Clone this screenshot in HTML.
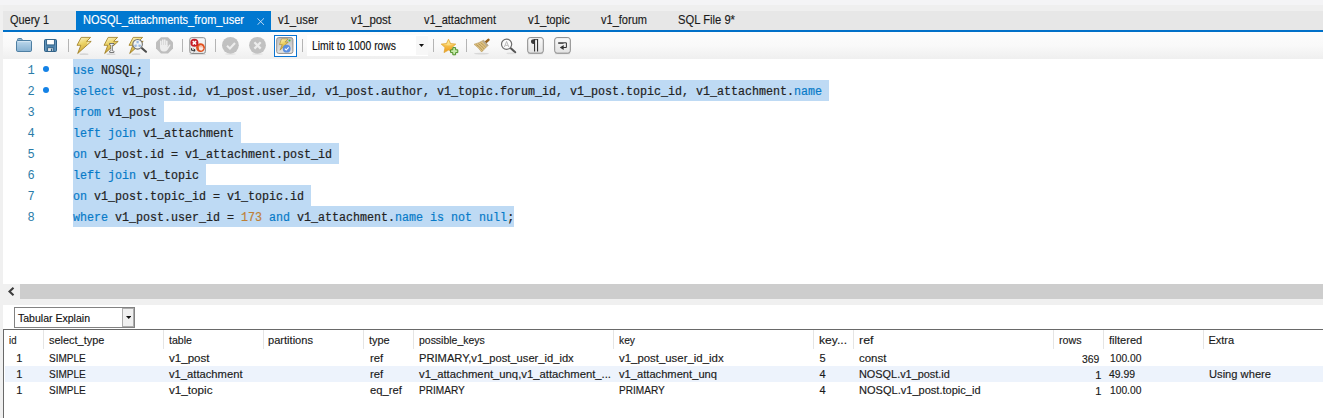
<!DOCTYPE html>
<html>
<head>
<meta charset="utf-8">
<title>MySQL Workbench</title>
<style>
html,body{margin:0;padding:0;}
body{width:1323px;height:418px;overflow:hidden;background:#f0f0f0;position:relative;font-family:"Liberation Sans",sans-serif;}
.abs{position:absolute;}
.t{position:absolute;white-space:pre;line-height:1;transform-origin:0 0;-webkit-text-stroke:0.15px;}
#topstrip{left:0;top:0;width:1323px;height:5px;background:#f4f4f6;}
#tabbar{left:3px;top:5px;width:1320px;height:25px;background:#e7e7e7;}
#tabbar0{left:3px;top:5px;width:1320px;height:6px;background:#efefef;}
#tabline{left:3px;top:30px;width:1320px;height:2px;background:#0070c8;}
#acttab{left:76px;top:11px;width:195px;height:20px;background:#0078d0;}
#toolbar{left:3px;top:32px;width:1320px;height:27px;background:linear-gradient(#fcfcfc 0%,#f9f9f9 50%,#efefef 100%);}
.sep{position:absolute;width:1px;top:39px;height:13px;background:#b4b4b4;}
#editor{left:3px;top:59px;width:1320px;height:225px;background:#fff;}
.sel{position:absolute;left:73px;height:21px;background:#bedaf4;}
.ln{position:absolute;font-family:"Liberation Mono",monospace;font-size:12px;color:#2a7ca8;width:20px;text-align:right;left:14.8px;line-height:21px;height:21px;padding-top:1.7px;}
.code{position:absolute;left:73px;font-family:"Liberation Mono",monospace;font-size:12px;color:#222;white-space:pre;line-height:21px;height:21px;padding-top:1.7px;transform:scaleX(0.9722);transform-origin:0 0;-webkit-text-stroke:0.2px;}
.k{color:#077ac8;}
.n{color:#bf7f35;}
.dot{position:absolute;width:6px;height:6px;border-radius:50%;background:#1482e6;left:43px;}
#hscroll{left:3px;top:284px;width:1320px;height:16px;background:#f0f0f0;}
#thumb{left:20px;top:284px;width:1303px;height:15px;background:#cdcdcd;}
#respanel{left:3px;top:305px;width:1320px;height:113px;background:#fff;}
#combo{left:14px;top:307px;width:119px;height:19px;border:1px solid #828282;background:#fff;}
#combobtn{left:122px;top:308px;width:10px;height:17px;border:1px solid #adadad;background:#f0f0f0;}
#tbl{left:3px;top:329px;width:1320px;height:89px;background:#fff;border-top:1px solid #696969;border-left:1px solid #696969;}
.hs{position:absolute;top:330px;width:1px;height:19px;background:#e5e5e5;}
#rowhl{left:5px;top:366px;width:1318px;height:16px;background:#edf3fc;}
</style>
</head>
<body>
<div class="abs" id="topstrip"></div>
<div class="abs" id="tabbar"></div>
<div class="abs" id="tabbar0"></div>
<div class="abs" id="acttab"></div>
<div class="abs" id="tabline"></div>
<div class="abs" id="toolbar"></div>
<div class="sep" style="left:68px"></div>
<div class="sep" style="left:182px"></div>
<div class="sep" style="left:215px"></div>
<div class="sep" style="left:302px"></div>
<div class="sep" style="left:433px"></div>
<div class="sep" style="left:466px"></div>
<div class="abs" style="left:307px;top:35px;width:121px;height:21px;background:#fff;"></div>
<div class="abs" style="left:416px;top:36px;width:12px;height:19px;background:#f7f7f7;"></div>
<svg class="abs" style="left:419px;top:44px" width="5" height="3" viewBox="0 0 5 3"><path d="M0 0h5L2.5 3z" fill="#111"/></svg>
<svg class="abs" style="left:0;top:32px" width="600" height="27" viewBox="0 32 600 27">
<defs>
<linearGradient id="gFolder" x1="0" y1="0" x2="0" y2="1"><stop offset="0" stop-color="#bdd8ec"/><stop offset="1" stop-color="#86b1d1"/></linearGradient>
<linearGradient id="gBolt" x1="0" y1="0" x2="0.35" y2="1"><stop offset="0" stop-color="#fcf6cf"/><stop offset="0.45" stop-color="#ecd468"/><stop offset="1" stop-color="#caa132"/></linearGradient>
<linearGradient id="gStar" x1="0" y1="0" x2="0" y2="1"><stop offset="0" stop-color="#fde27a"/><stop offset="1" stop-color="#ee9a18"/></linearGradient>
<linearGradient id="gBtn" x1="0" y1="0" x2="0" y2="1"><stop offset="0" stop-color="#fafafa"/><stop offset="1" stop-color="#e2e2e2"/></linearGradient>
<linearGradient id="gBtnDn" x1="0" y1="0" x2="0" y2="1"><stop offset="0" stop-color="#bdbdbd"/><stop offset="1" stop-color="#e4e4e4"/></linearGradient>
<path id="bolt" d="M4.2 0.4H13.6L9.6 4.4H14.2L0.7 16.5L3.8 8.3H0Z"/>
</defs>
<!-- folder -->
<path d="M17.5 41V39.6Q17.5 38.5 18.6 38.5H21.2Q22.2 38.5 22.5 41Z" fill="#8fb4d0" stroke="#4e7fa3"/>
<rect x="16.5" y="40.5" width="15" height="11" rx="1.3" fill="url(#gFolder)" stroke="#4e7fa3"/>
<path d="M17.6 41.6H30.4" stroke="#d4e6f3" stroke-width="1"/>
<!-- floppy -->
<rect x="44.5" y="39.5" width="12" height="12" rx="1" fill="#4f84ad" stroke="#2e5f85"/>
<path d="M45.6 40.5V50.5M55.4 40.5V50.5" stroke="#6d9cc0" stroke-width="0.8"/>
<rect x="46.6" y="39.5" width="7.8" height="5.4" fill="#fff" stroke="#2e5f85" stroke-width="0.9"/>
<rect x="47.6" y="47.7" width="5.6" height="3.8" fill="#e8e8e8" stroke="#2e5f85" stroke-width="0.9"/>
<rect x="50.9" y="48.6" width="1.2" height="2.4" fill="#2e5f85"/>
<!-- bolt 1 -->
<ellipse cx="84" cy="54.2" rx="4.5" ry="0.9" fill="#d6d6d6"/>
<use href="#bolt" x="77" y="37" fill="url(#gBolt)" stroke="#9c7a1e" stroke-width="0.8"/>
<path d="M87.5 41.8H90L87 44.5Z" fill="#f8f0c8" opacity="0.8"/>
<!-- bolt 2 + I cursor -->
<ellipse cx="111" cy="54.2" rx="4.5" ry="0.9" fill="#d6d6d6"/>
<use href="#bolt" x="104" y="37" fill="url(#gBolt)" stroke="#9c7a1e" stroke-width="0.8"/>
<path d="M110.3 44.2H113.3M110.3 51.8H113.3M111.8 44.2V51.8" stroke="#4a4a4a" stroke-width="2.3" stroke-linecap="round"/>
<path d="M110.3 44.2H113.3M110.3 51.8H113.3M111.8 44.2V51.8" stroke="#fff" stroke-width="1.1" stroke-linecap="round"/>
<!-- bolt 3 + magnifier -->
<ellipse cx="136" cy="54.2" rx="4.5" ry="0.9" fill="#d6d6d6"/>
<use href="#bolt" x="129" y="37" fill="url(#gBolt)" stroke="#9c7a1e" stroke-width="0.8"/>
<path d="M142 48.2L146 51.7" stroke="#4c4c4c" stroke-width="2.1" stroke-linecap="round"/>
<circle cx="137.6" cy="44.3" r="4.8" fill="#f4f6f4" stroke="#727272" stroke-width="1.1"/>
<path d="M137.6 42.3L135.6 46H139.6Z" fill="none" stroke="#c9d6ea" stroke-width="0.6"/>
<circle cx="137.6" cy="42" r="1.3" fill="#9dbbe3"/><circle cx="135.5" cy="45.8" r="1.3" fill="#9dbbe3"/><circle cx="139.7" cy="45.8" r="1.3" fill="#9dbbe3"/>
<!-- stop (disabled) -->
<path d="M161 37.2H168L173 42.2V48.5L168 53.5H161L156 48.5V42.2Z" fill="#bebebe"/>
<path d="M160.8 46.5V41.3M162.8 45V40.1M164.8 45V40.1M166.8 45.5V41.2" stroke="#ededed" stroke-width="1.6" stroke-linecap="round" fill="none"/>
<path d="M160 45H167.6V47.2Q168.6 45.2 169.8 44.3Q170.7 44.6 170.3 45.6Q168.8 48 167.5 50Q166.3 51.6 164 51.6Q160 51.6 160 47Z" fill="#ededed"/>
<!-- stop-on-error toggle -->
<rect x="189.6" y="54" width="16" height="1" fill="#dcdcdc"/>
<rect x="189.8" y="37.7" width="15.6" height="15.8" rx="2" fill="url(#gBtn)" stroke="#8c8c8c"/>
<path d="M191.6 48.2V50.3H195M193.6 48.8L195.2 50.3L193.6 51.8" stroke="#2a2a2a" stroke-width="1" fill="none"/>
<circle cx="200.5" cy="47.6" r="4.4" fill="#e2501c"/>
<path d="M199.3 47.8V46.2M200.3 47.5V45.6M201.3 47.5V45.6M202.3 48V46.3" stroke="#fbe9e2" stroke-width="0.85" stroke-linecap="round" fill="none"/>
<path d="M198.9 47.3H202.7V48.2L203.3 47.4Q203.8 47.6 203.5 48.2Q203 49.4 202.4 50Q201.8 50.6 200.7 50.6Q198.9 50.6 198.9 48.6Z" fill="#fbe9e2"/>
<circle cx="194.4" cy="42.8" r="4" fill="#c61d27"/>
<path d="M192.7 41.1L196.1 44.5M196.1 41.1L192.7 44.5" stroke="#fff" stroke-width="1.5"/>
<!-- commit / rollback (disabled) -->
<ellipse cx="230.4" cy="54" rx="5.5" ry="0.8" fill="#e0e0e0"/>
<circle cx="230.4" cy="45.3" r="8.4" fill="#c1c1c1"/>
<path d="M227 45.8L229.9 48.5L235 43" stroke="#ededed" stroke-width="2.1" fill="none"/>
<ellipse cx="257.5" cy="54" rx="5.5" ry="0.8" fill="#e0e0e0"/>
<circle cx="257.5" cy="45.3" r="8.4" fill="#c1c1c1"/>
<path d="M254.4 42.3L260.7 48.6M260.7 42.3L254.4 48.6" stroke="#ededed" stroke-width="2.2"/>
<!-- autocommit toggle (focused) -->
<rect x="274.5" y="35.5" width="22" height="21" fill="#fff" stroke="#0a74d2"/>
<rect x="276.7" y="37.6" width="16.2" height="15.8" rx="2" fill="url(#gBtnDn)" stroke="#909090"/>
<path d="M281.5 38.9H288L285.2 42H288.2L280 50.2L282.2 44.6H279.5Z" fill="url(#gBolt)" stroke="#a88628" stroke-width="0.6"/>
<circle cx="286.7" cy="48.7" r="3.9" fill="#5b90e0"/>
<path d="M284.8 48.7L286.2 50L288.7 47.3" stroke="#fff" stroke-width="1.1" fill="none"/>
<circle cx="289.5" cy="40.5" r="1" fill="#41c241"/>
<!-- star + -->
<path d="M448.5 39.2L450.6 43.6L455.8 44.1L452 47.5L453 52.6L448.5 50.1L444 52.6L445 47.5L441.2 44.1L446.4 43.6Z" fill="url(#gStar)" stroke="#dba02c" stroke-width="0.7"/>
<path d="M448.5 40.5L450 44.3L454 44.7L448.5 45.5L443 44.7L447 44.3Z" fill="#fff3b0" opacity="0.55"/>
<path d="M452.8 47.6H455.6V49.8H457.8V52.6H455.6V54.8H452.8V52.6H450.6V49.8H452.8Z" fill="#c6eaaa" stroke="#4c8f26" stroke-width="1"/>
<!-- broom -->
<ellipse cx="481.5" cy="53.7" rx="7.5" ry="0.9" fill="#d8d8d8"/>
<path d="M485.6 42.4L488.4 39.9" stroke="#94601c" stroke-width="2.6" stroke-linecap="round"/>
<path d="M474 44.3Q479 43 483.6 40.2L488.2 45.3Q485 48.5 481.6 52Q478.5 47.5 474 44.3Z" fill="#ddc082" stroke="#b89858" stroke-width="0.6"/>
<path d="M476.2 44.6Q479.5 46.2 482.6 50.6M478.4 43.7Q481.5 45.6 484.2 49M480.6 42.6Q483.2 44.6 485.8 47.4" stroke="#a98942" stroke-width="0.7" fill="none"/>
<path d="M483.6 40.2L488.2 45.3L486.6 46.8Q484.5 43.5 482 41.3Z" fill="#b7ab94"/>
<!-- find -->
<path d="M510.8 48.3L515.2 52.2" stroke="#555" stroke-width="2.1" stroke-linecap="round"/>
<ellipse cx="511" cy="53.4" rx="4.5" ry="0.8" fill="#dedede"/>
<circle cx="506.6" cy="44.2" r="5.1" fill="#fcfcfc" stroke="#6e6e6e" stroke-width="1.2"/>
<path d="M504.4 47L506.6 41.4L508.8 47M505.4 45.4H507.8" stroke="#b4b4b4" stroke-width="0.9" fill="none"/>
<!-- pilcrow -->
<rect x="527.8" y="53" width="15.4" height="1.2" rx="0.6" fill="#d4d4d4"/>
<rect x="527.7" y="37.6" width="15.6" height="15.6" rx="2.4" fill="url(#gBtn)" stroke="#888"/>
<path d="M534.2 39.2H533.6Q531 39.2 531 41.6Q531 44 533.6 44H534.2Z" fill="#3a3a3a"/>
<rect x="534" y="39.2" width="1.1" height="12.3" fill="#333"/><rect x="537" y="39.2" width="1.1" height="12.3" fill="#333"/><rect x="534" y="39.2" width="4.1" height="0.9" fill="#333"/>
<!-- wrap -->
<rect x="554.8" y="53" width="15.4" height="1.2" rx="0.6" fill="#d4d4d4"/>
<rect x="554.7" y="37.6" width="15.6" height="15.6" rx="2.4" fill="url(#gBtn)" stroke="#888"/>
<rect x="558.2" y="42.3" width="5.4" height="1.5" fill="#333"/>
<path d="M563.4 42.8H566.4V47.5H563" stroke="#333" stroke-width="1" fill="none"/>
<path d="M563.7 45.1L559.8 47.5L563.7 49.9Z" fill="#333"/>
</svg>
<svg class="abs" style="left:257px;top:18px" width="7.4" height="7.2" viewBox="0 0 7.4 7.2"><path d="M0.4 0.3L7 6.9M7 0.3L0.4 6.9" stroke="#cfe4f8" stroke-width="0.9"/></svg>

<div class="abs" id="editor"></div>
<div class="sel" style="top:59px;width:77px"></div>
<div class="sel" style="top:80px;width:756px"></div>
<div class="sel" style="top:101px;width:91px"></div>
<div class="sel" style="top:122px;width:168px"></div>
<div class="sel" style="top:143px;width:266px"></div>
<div class="sel" style="top:164px;width:133px"></div>
<div class="sel" style="top:185px;width:238px"></div>
<div class="sel" style="top:206px;width:441px"></div>
<div class="ln" style="top:59px">1</div>
<div class="dot" style="top:66px"></div>
<div class="code" style="top:59px"><span class="k">use</span> NOSQL;</div>
<div class="ln" style="top:80px">2</div>
<div class="dot" style="top:87px"></div>
<div class="code" style="top:80px"><span class="k">select</span> v1_post.id, v1_post.user_id, v1_post.author, v1_topic.forum_id, v1_post.topic_id, v1_attachment.<span class="k">name</span></div>
<div class="ln" style="top:101px">3</div>
<div class="code" style="top:101px"><span class="k">from</span> v1_post</div>
<div class="ln" style="top:122px">4</div>
<div class="code" style="top:122px"><span class="k">left</span> <span class="k">join</span> v1_attachment</div>
<div class="ln" style="top:143px">5</div>
<div class="code" style="top:143px"><span class="k">on</span> v1_post.id = v1_attachment.post_id</div>
<div class="ln" style="top:164px">6</div>
<div class="code" style="top:164px"><span class="k">left</span> <span class="k">join</span> v1_topic</div>
<div class="ln" style="top:185px">7</div>
<div class="code" style="top:185px"><span class="k">on</span> v1_post.topic_id = v1_topic.id</div>
<div class="ln" style="top:206px">8</div>
<div class="code" style="top:206px"><span class="k">where</span> v1_post.user_id = <span class="n">173</span> <span class="k">and</span> v1_attachment.<span class="k">name</span> <span class="k">is</span> <span class="k">not</span> <span class="k">null</span>;</div>
<div class="abs" id="hscroll"></div>
<div class="abs" id="thumb"></div>
<svg class="abs" style="left:8px;top:287px" width="7" height="9" viewBox="0 0 7 9"><path d="M5.5 0.8L1.5 4.5L5.5 8.2" fill="none" stroke="#3c3c3c" stroke-width="2.1"/></svg>
<div class="abs" id="respanel"></div>
<div class="abs" id="combo"></div>
<div class="abs" id="combobtn"></div>
<svg class="abs" style="left:125.8px;top:316px" width="5.4" height="3" viewBox="0 0 5.4 3"><path d="M0 0h5.4L2.7 3z" fill="#111"/></svg>
<div class="abs" id="tbl"></div>
<div class="abs" id="rowhl"></div>
<div class="hs" style="left:43px"></div>
<div class="hs" style="left:163px"></div>
<div class="hs" style="left:263px"></div>
<div class="hs" style="left:363px"></div>
<div class="hs" style="left:413px"></div>
<div class="hs" style="left:613px"></div>
<div class="hs" style="left:813px"></div>
<div class="hs" style="left:853px"></div>
<div class="hs" style="left:1053px"></div>
<div class="hs" style="left:1103px"></div>
<div class="hs" style="left:1203px"></div>
<span class="t" style="left:10px;top:13.5px;font-size:12px;color:#1b1b1b;transform:scaleX(0.9136);">Query 1</span>
<span class="t" style="left:83px;top:13.5px;font-size:12px;color:#ffffff;transform:scaleX(0.9213);">NOSQL_attachments_from_user</span>
<span class="t" style="left:278px;top:13.5px;font-size:12px;color:#1b1b1b;transform:scaleX(0.9367);">v1_user</span>
<span class="t" style="left:351px;top:13.5px;font-size:12px;color:#1b1b1b;transform:scaleX(0.9517);">v1_post</span>
<span class="t" style="left:424px;top:13.5px;font-size:12px;color:#1b1b1b;transform:scaleX(0.9146);">v1_attachment</span>
<span class="t" style="left:528px;top:13.5px;font-size:12px;color:#1b1b1b;transform:scaleX(0.9395);">v1_topic</span>
<span class="t" style="left:601px;top:13.5px;font-size:12px;color:#1b1b1b;transform:scaleX(0.9194);">v1_forum</span>
<span class="t" style="left:678px;top:13.5px;font-size:12px;color:#1b1b1b;transform:scaleX(0.9356);">SQL File 9*</span>
<span class="t" style="left:311.5px;top:39.5px;font-size:12px;color:#111;transform:scaleX(0.8625);">Limit to 1000 rows</span>
<span class="t" style="left:18.2px;top:312.5px;font-size:11px;color:#111;transform:scaleX(0.9572);">Tabular Explain</span>
<span class="t" style="left:8.5px;top:335px;font-size:11px;color:#1a1a1a;transform:scaleX(0.8759);">id</span>
<span class="t" style="left:48.7px;top:335px;font-size:11px;color:#1a1a1a;transform:scaleX(0.9936);">select_type</span>
<span class="t" style="left:169px;top:335px;font-size:11px;color:#1a1a1a;transform:scaleX(0.9640);">table</span>
<span class="t" style="left:268.3px;top:335px;font-size:11px;color:#1a1a1a;transform:scaleX(1.0081);">partitions</span>
<span class="t" style="left:369.3px;top:335px;font-size:11px;color:#1a1a1a;transform:scaleX(0.9953);">type</span>
<span class="t" style="left:418.6px;top:335px;font-size:11px;color:#1a1a1a;transform:scaleX(0.9509);">possible_keys</span>
<span class="t" style="left:618.7px;top:335px;font-size:11px;color:#1a1a1a;transform:scaleX(0.9343);">key</span>
<span class="t" style="left:818.7px;top:335px;font-size:11px;color:#1a1a1a;transform:scaleX(1.0987);">key...</span>
<span class="t" style="left:858.5px;top:335px;font-size:11px;color:#1a1a1a;transform:scaleX(1.1290);">ref</span>
<span class="t" style="left:1058.7px;top:335px;font-size:11px;color:#1a1a1a;transform:scaleX(0.9727);">rows</span>
<span class="t" style="left:1108.8px;top:335px;font-size:11px;color:#1a1a1a;transform:scaleX(1.0051);">filtered</span>
<span class="t" style="left:1208.4px;top:335px;font-size:11px;color:#1a1a1a;">Extra</span>
<span class="t" style="left:16.3px;top:353px;font-size:11px;color:#1a1a1a;">1</span>
<span class="t" style="left:49.1px;top:353px;font-size:11px;color:#1a1a1a;transform:scaleX(0.9118);">SIMPLE</span>
<span class="t" style="left:169.4px;top:353px;font-size:11px;color:#1a1a1a;transform:scaleX(1.0511);">v1_post</span>
<span class="t" style="left:369.5px;top:353px;font-size:11px;color:#1a1a1a;transform:scaleX(1.0277);">ref</span>
<span class="t" style="left:419.4px;top:353px;font-size:11px;color:#1a1a1a;transform:scaleX(1.0146);">PRIMARY,v1_post_user_id_idx</span>
<span class="t" style="left:619.4px;top:353px;font-size:11px;color:#1a1a1a;transform:scaleX(1.0366);">v1_post_user_id_idx</span>
<span class="t" style="left:819.5px;top:353px;font-size:11px;color:#1a1a1a;">5</span>
<span class="t" style="left:859.4px;top:353px;font-size:11px;color:#1a1a1a;transform:scaleX(1.0419);">const</span>
<span class="t" style="left:1082.3px;top:354px;font-size:11px;color:#1a1a1a;transform:scaleX(0.9423);">369</span>
<span class="t" style="left:1109.8px;top:353px;font-size:11px;color:#1a1a1a;transform:scaleX(0.9330);">100.00</span>
<span class="t" style="left:16.3px;top:369px;font-size:11px;color:#1a1a1a;">1</span>
<span class="t" style="left:49.1px;top:369px;font-size:11px;color:#1a1a1a;transform:scaleX(0.9118);">SIMPLE</span>
<span class="t" style="left:169.4px;top:369px;font-size:11px;color:#1a1a1a;transform:scaleX(1.0186);">v1_attachment</span>
<span class="t" style="left:369.5px;top:369px;font-size:11px;color:#1a1a1a;transform:scaleX(1.0277);">ref</span>
<span class="t" style="left:419.4px;top:369px;font-size:11px;color:#1a1a1a;transform:scaleX(1.0261);">v1_attachment_unq,v1_attachment_...</span>
<span class="t" style="left:619.4px;top:369px;font-size:11px;color:#1a1a1a;transform:scaleX(1.0141);">v1_attachment_unq</span>
<span class="t" style="left:819.5px;top:369px;font-size:11px;color:#1a1a1a;">4</span>
<span class="t" style="left:859.4px;top:369px;font-size:11px;color:#1a1a1a;transform:scaleX(0.9900);">NOSQL.v1_post.id</span>
<span class="t" style="left:1095.3px;top:370px;font-size:11px;color:#1a1a1a;">1</span>
<span class="t" style="left:1109.2px;top:369px;font-size:11px;color:#1a1a1a;transform:scaleX(0.9480);">49.99</span>
<span class="t" style="left:1209.4px;top:369px;font-size:11px;color:#1a1a1a;transform:scaleX(1.0141);">Using where</span>
<span class="t" style="left:16.3px;top:385px;font-size:11px;color:#1a1a1a;">1</span>
<span class="t" style="left:49.1px;top:385px;font-size:11px;color:#1a1a1a;transform:scaleX(0.9118);">SIMPLE</span>
<span class="t" style="left:169.4px;top:385px;font-size:11px;color:#1a1a1a;transform:scaleX(1.0614);">v1_topic</span>
<span class="t" style="left:369.5px;top:385px;font-size:11px;color:#1a1a1a;transform:scaleX(1.0191);">eq_ref</span>
<span class="t" style="left:419.4px;top:385px;font-size:11px;color:#1a1a1a;transform:scaleX(0.9174);">PRIMARY</span>
<span class="t" style="left:619.4px;top:385px;font-size:11px;color:#1a1a1a;transform:scaleX(0.9174);">PRIMARY</span>
<span class="t" style="left:819.5px;top:385px;font-size:11px;color:#1a1a1a;">4</span>
<span class="t" style="left:859.4px;top:385px;font-size:11px;color:#1a1a1a;transform:scaleX(1.0043);">NOSQL.v1_post.topic_id</span>
<span class="t" style="left:1095.3px;top:386px;font-size:11px;color:#1a1a1a;">1</span>
<span class="t" style="left:1109.8px;top:385px;font-size:11px;color:#1a1a1a;transform:scaleX(0.9330);">100.00</span>
</body>
</html>
